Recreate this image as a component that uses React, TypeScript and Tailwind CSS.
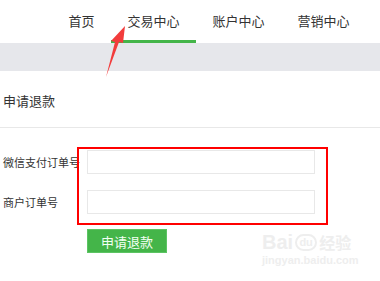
import React from "react";

const navItems = [
  { label: "首页", active: false },
  { label: "交易中心", active: true },
  { label: "账户中心", active: false },
  { label: "营销中心", active: false },
];

export default function App() {
  return (
    <div className="relative w-[380px] h-[281px] bg-white overflow-hidden font-['Noto_Sans_CJK_SC','Noto_Sans',sans-serif] text-[#333]">
      <header className="h-[43px] flex pl-[52px]">
        {navItems.map((n) => (
          <div key={n.label} className="flex flex-col">
            <div className="h-[40px] flex items-center px-[16.5px] text-[13px] leading-none text-[#333]">
              {n.label}
            </div>
            <div className={n.active ? "h-[3px] bg-[#44b549]" : "h-[3px]"} />
          </div>
        ))}
      </header>
      <div className="h-[28px] bg-[#e6e7eb]" />
      <div className="h-[57px] border-b border-[#e8e8e8] flex items-center pl-[3px] pt-[3px] text-[13px] leading-none text-[#333]">
        申请退款
      </div>
      <div className="pt-[22px] flex flex-col gap-[16px]">
        <div className="flex items-center">
          <div className="w-[87px] pl-[3px] text-[11px] leading-none text-[#333]">微信支付订单号</div>
          <div className="w-[228px] h-[24px] border border-[#e8e8e8] bg-white" />
        </div>
        <div className="flex items-center">
          <div className="w-[87px] pl-[3px] text-[11px] leading-none text-[#333]">商户订单号</div>
          <div className="w-[228px] h-[24px] border border-[#e8e8e8] bg-white" />
        </div>
      </div>
      <div className="pl-[87px] pt-[15px]">
        <div className="w-[80px] h-[24px] bg-[#44b549] border border-[#5cc463] flex items-center justify-center text-[13px] leading-none text-[#f3fff3]">
          申请退款
        </div>
      </div>

      {/* annotation box */}
      <div className="absolute left-[77px] top-[147px] w-[251px] h-[78px] border-2 border-[#ff0000]" />

      {/* annotation arrow */}
      <svg className="absolute left-0 top-0" width="380" height="281" viewBox="0 0 380 281">
        <polygon points="125,26 123,43 119,42 106,77 115,42 111,41" fill="#f23c3c" />
      </svg>

      {/* watermark */}
      <div className="absolute left-[262px] top-[232px] flex flex-col items-start leading-none text-[#eeeeee]">
        <div className="flex items-center font-['Liberation_Sans',sans-serif] font-bold text-[20px]">
          <span>Bai</span>
          <span className="ml-[2px] w-[22px] h-[17px] rounded-full border-2 border-[#eeeeee] text-[11px] flex items-center justify-center">du</span>
          <span className="ml-[2px] text-[16px] font-['Noto_Sans_CJK_SC',sans-serif]">经验</span>
        </div>
        <div className="mt-[3px] text-[11px] font-['Liberation_Sans',sans-serif] font-bold">jingyan.baidu.com</div>
      </div>
    </div>
  );
}
